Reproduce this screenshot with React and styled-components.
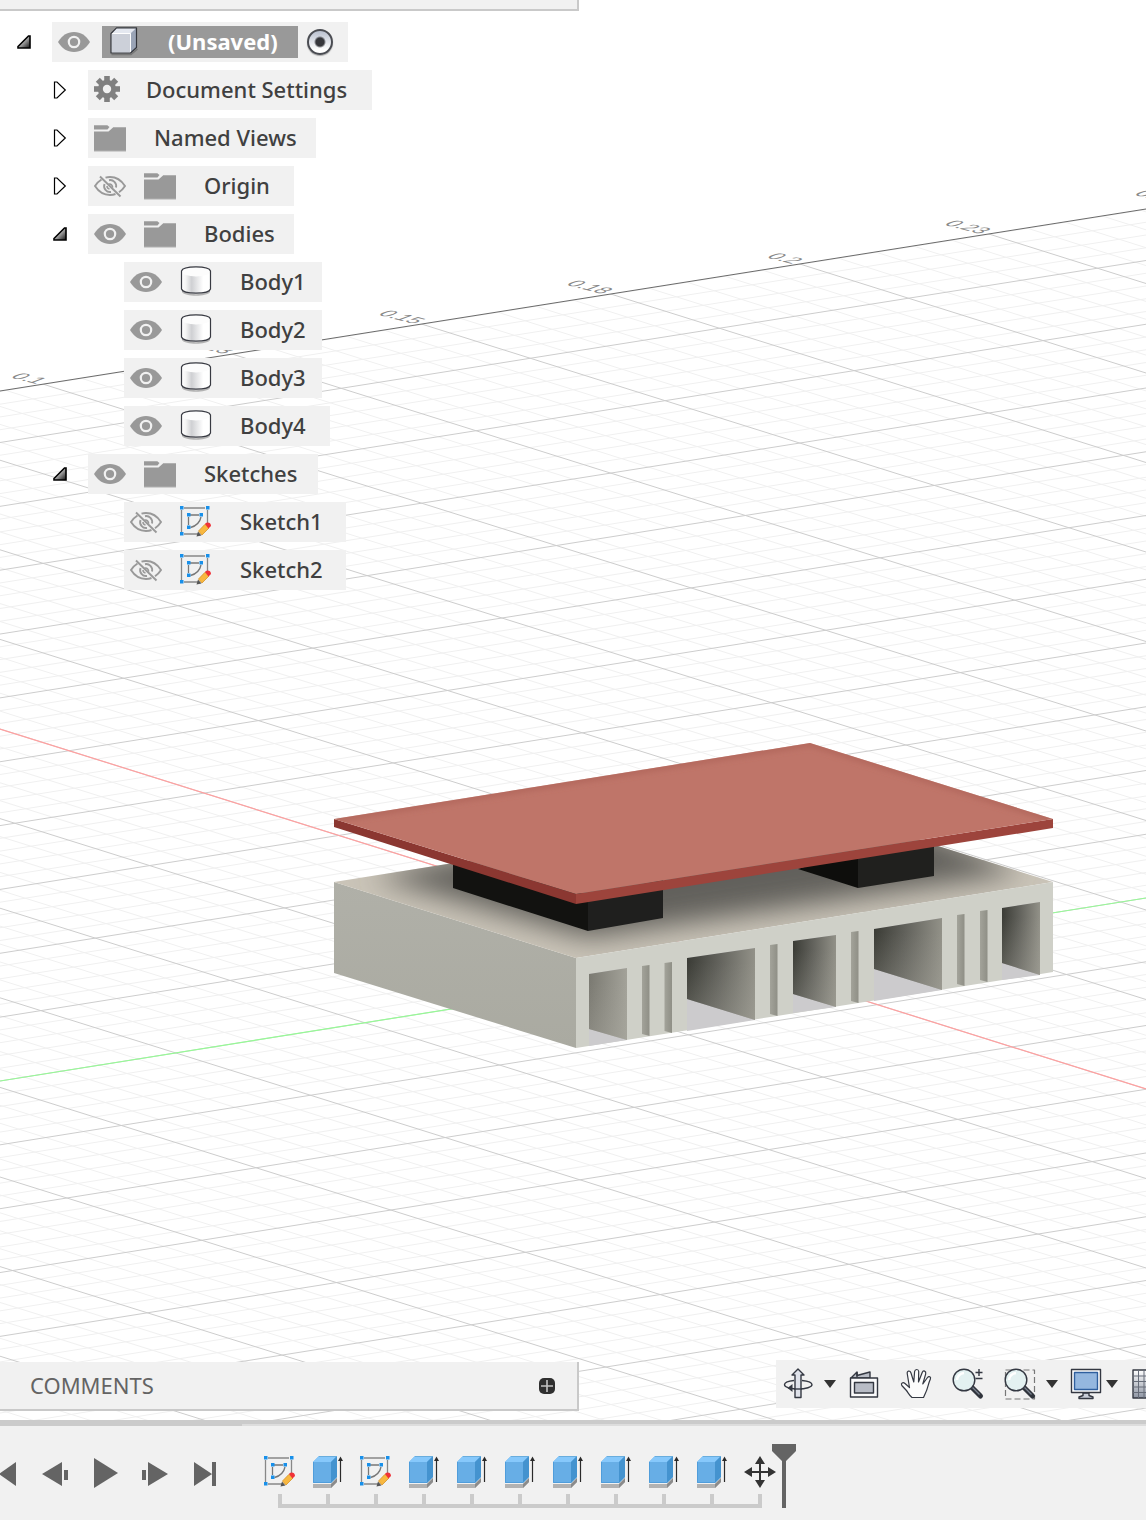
import React, { useState } from "react";
import styled, { createGlobalStyle } from "styled-components";

const GlobalStyle = createGlobalStyle`
  * { box-sizing: border-box; }
  body { margin: 0; background: #fff; }
  button { margin: 0; padding: 0; border: 0; background: none; font: inherit; color: inherit; }
  ul, ol { list-style: none; margin: 0; padding: 0; }
  svg { display: block; flex: none; }
`;

/* ---------- layout ---------- */

const Page = styled.main`
  min-height: 100vh;
  display: grid;
  grid-template-rows: 1fr auto;
  overflow: hidden;
  font-family: "Noto Sans", "Open Sans", sans-serif;
  font-size: 22px;
  font-weight: 500;
  line-height: 32px;
  color: #404040;
`;

const Workspace = styled.section`
  display: grid;
  grid-template: minmax(0, 1fr) / minmax(0, 1fr);
  min-height: 0;
`;

const SceneSvg = styled.svg`
  grid-area: 1 / 1;
  width: 100%;
  height: 100%;
`;

const Overlay = styled.div`
  grid-area: 1 / 1;
  display: flex;
  flex-direction: column;
  justify-content: space-between;
  z-index: 1;
`;

const BrowserHeader = styled.div`
  width: 579px;
  height: 11px;
  background: #f1f1f1;
  border-bottom: 2px solid #c9c9c9;
  border-right: 2px solid #c9c9c9;
`;

const Tree = styled.ul`
  padding-top: 7px;
`;

const TreeRow = styled.li`
  display: flex;
  align-items: center;
  height: 48px;
  padding-left: ${(p) => p.$level * 36}px;
`;

const Toggle = styled.button`
  width: 52px;
  height: 40px;
  padding-left: 17px;
  visibility: ${(p) => (p.$leaf ? "hidden" : "visible")};
`;

const RowBody = styled.div`
  display: flex;
  align-items: center;
  width: ${(p) => p.$width}px;
  height: 40px;
  padding-left: 6px;
  background: #f1f1f1;
  white-space: nowrap;
`;

const EyeButton = styled.button`
  width: 32px;
  height: 32px;
  margin-right: ${(p) => (p.$root ? 12 : 18)}px;
`;

const Label = styled.span`
  margin-left: 28px;
  padding-bottom: 2px;
`;

const RootChip = styled.span`
  display: flex;
  align-items: center;
  width: 196px;
  height: 32px;
  padding-left: 6px;
  background: #999;
  color: #fff;
  font-weight: 700;
`;

const ActiveRadio = styled.input`
  appearance: none;
  width: 26px;
  height: 26px;
  margin: 0 0 0 9px;
  border: 2px solid #4a4c52;
  border-radius: 50%;
  background:
    radial-gradient(circle, #36373c 0 4px, transparent 6px),
    linear-gradient(#b9c0cf, #fff 85%);
  box-shadow: 0 1px 1px #aaa;
`;

const BottomRow = styled.div`
  display: flex;
  justify-content: space-between;
  align-items: flex-start;
  height: 60px;
`;

const CommentsPanel = styled.div`
  display: flex;
  align-items: center;
  justify-content: space-between;
  width: 579px;
  height: 49px;
  margin-top: 2px;
  padding: 0 22px 0 30px;
  background: #f1f1f1;
  border-right: 2px solid #c9c9c9;
  border-bottom: 2px solid #c9c9c9;
  color: #646464;
  font-weight: 400;
`;

const PanelTitle = styled.span`
  padding-bottom: 2px;
`;

const NavBar = styled.nav`
  display: flex;
  align-items: center;
  width: 370px;
  height: 48px;
  padding-left: 6px;
  background: #f1f1f1;
  overflow: hidden;
`;

const Tool = styled.button`
  flex: none;
  margin-left: ${(p) => p.$gap || 0}px;
`;

const Timeline = styled.footer`
  display: flex;
  height: 100px;
  background: #f1f1f1;
  border-top: 4px solid #cbcbcb;
`;

const Playback = styled.div`
  display: flex;
  align-items: flex-start;
  gap: 20px;
  flex: none;
  width: 242px;
  padding-top: 30px;
  border-top: 2px solid #cbcbcb;
  overflow: hidden;

  & > button:first-child { margin-left: -10px; }
`;

const History = styled.div`
  display: flex;
  flex: 1;
  align-items: flex-start;
  padding-left: 14px;
  border-top: 2px solid #ddd;
`;

const Track = styled.div`
  padding-top: 30px;
`;

const Steps = styled.ol`
  display: flex;
`;

const Step = styled.li`
  display: flex;
  flex-direction: column;
  align-items: center;
  gap: 6px;
  width: 48px;

  &::after { content: ""; width: 4px; height: 10px; background: #cbcbcb; }
`;

const Rail = styled.div`
  height: 4px;
  margin: 0 22px;
  background: #cbcbcb;
`;

const Marker = styled.button`
  margin: 18px 0 0 -12px;
`;

/* ---------- tree icons ---------- */

const OpenArrow = () => (
  <svg width="14" height="14" viewBox="0 0 14 14">
    <defs>
      <linearGradient id="arrowFill" x1="0" y1="0" x2="1" y2="1">
        <stop offset=".3" stopColor="#ddd" />
        <stop offset="1" stopColor="#111" />
      </linearGradient>
    </defs>
    <path d="M1 13V11.5L11.5 1H13V13Z" fill="url(#arrowFill)" stroke="#000" strokeWidth="1.6" />
  </svg>
);

const ClosedArrow = () => (
  <svg width="14" height="18" viewBox="0 0 14 18">
    <path d="M1.5 1H4L12.3 9L4 17H1.5Z" fill="#fff" stroke="#000" strokeWidth="1.2" />
  </svg>
);

const Eye = () => (
  <svg width="32" height="32" viewBox="0 0 32 32">
    <path d="M0 16C4 9.5 9 6 16 6S28 9.500 32 16C28 22.500 23 26 16 26S4 22.500 0 16Z" fill="#999" />
    <circle cx="16" cy="16" r="5.200" fill="#999" stroke="#f1f1f1" strokeWidth="2.200" />
  </svg>
);

const EyeOff = () => (
  <svg width="32" height="32" viewBox="0 0 32 32" fill="none" stroke="#999" strokeWidth="1.900">
    <path d="M7.500 9.500C4.800 11.200 2.500 13.500 1 16C4.500 21.500 9.500 25 16 25C18 25 19.800 24.700 21.500 24" />
    <path d="M11.500 7.700C13 7.200 14.500 7 16 7C22.500 7 27.500 10.500 31 16C29.500 18.400 27.400 20.600 25 22.200" />
    <path d="M10.500 14A6 6 0 0 0 17 22M15 10.200A6 6 0 0 1 22 17.500" />
    <path d="M14.500 14.300A3 3 0 0 1 18.500 17.800M13 16A3 3 0 0 0 15.500 19" strokeWidth="1.500" />
    <path d="M6 6.500L26.500 26.500" />
  </svg>
);

const Folder = () => (
  <svg width="32" height="32" viewBox="0 0 32 32">
    <path d="M0 3.500H13.500L15.500 5L13.500 7.500H0Z" fill="#999" />
    <path d="M0 9.500H14.500L19 5.500H32V29H0Z" fill="#999" />
    <path d="M0 29h32M19 5.500h13M0 3.500h13.500" stroke="#b0b0b0" />
  </svg>
);

const Gear = () => (
  <svg width="24" height="32" viewBox="0 0 24 32" overflow="visible">
    <g transform="translate(13 15)" fill="#808080">
      {[0, 45, 90, 135].map((a) => (
        <rect key={a} x="-2.800" y="-13" width="5.600" height="26" transform={`rotate(${a})`} />
      ))}
      <circle r="9.200" />
      <circle r="4.200" fill="#f1f1f1" />
    </g>
  </svg>
);

const Cylinder = () => (
  <svg width="32" height="32" viewBox="0 0 32 32">
    <defs>
      <linearGradient id="cylFill">
        <stop offset="0" stopColor="#fff" />
        <stop offset=".15" stopColor="#f4f4f4" />
        <stop offset=".35" stopColor="#cfd0d3" />
        <stop offset=".75" stopColor="#fff" />
      </linearGradient>
    </defs>
    <path d="M2 24C5 29.500 27 29.500 30 24V26C27 31 5 31 2 26Z" fill="#888" opacity=".6" />
    <path d="M1.500 5V23C3 28.500 29 28.500 30.500 23V5Z" fill="url(#cylFill)" />
    <ellipse cx="16" cy="5.700" rx="14.500" ry="4.700" fill="#fcfcfc" />
    <path d="M1.500 5V23C3 28.500 29 28.500 30.500 23V5C29 -.5 3 -.5 1.500 5Z" fill="none" stroke="#383a42" strokeWidth="1.200" />
  </svg>
);

const Cube = () => (
  <svg width="32" height="32" viewBox="0 0 32 32">
    <path d="M3.500 28.500H23L29.500 23" fill="none" stroke="#555" strokeWidth="1.500" opacity=".5" />
    <path d="M3 7.500L8.500 1.800H28.500V21.500L22.500 27H3Z" fill="#e4e8f0" />
    <path d="M22.500 7.500L28.500 1.800V21.500L22.500 27Z" fill="#9aa4b6" />
    <path d="M4 8H22V26H4Z" fill="#ccd0d9" />
    <path d="M3 7.500H22.500V27" fill="none" stroke="#fff" />
    <path d="M3 7.500L8.500 1.800H28.500V21.500L22.500 27H3Z" fill="none" stroke="#32343a" strokeWidth="1.200" strokeLinejoin="round" />
  </svg>
);

const SketchIcon = () => (
  <svg width="32" height="32" viewBox="0 0 32 32">
    <path d="M4 2H25M1.500 4V26M27.500 4V18M4 28H18" fill="none" stroke="#888" strokeWidth="1.300" />
    <path d="M10 9H19M8.500 11V19M21 11C20 16 16 20 10.500 21.500" fill="none" stroke="#777" strokeWidth="1.300" />
    {[[0, 0], [26, 0], [0, 26], [7, 7], [19.500, 7], [7, 19.500]].map(([x, y]) => (
      <rect key={`${x}-${y}`} x={x} y={y} width="3.500" height="3.500" fill="#1890ea" />
    ))}
    <path d="M16.500 30.500L18 25.500L21.500 29.500Z" fill="#555" />
    <path d="M18.500 25L25 18.300L29 22L22 29Z" fill="#f8b840" stroke="#d69328" strokeWidth=".8" />
    <path d="M25 18C26.500 15.500 31 16 31 20L28.500 22.500Z" fill="#f03238" />
  </svg>
);

const ExtrudeIcon = () => (
  <svg width="32" height="32" viewBox="0 0 32 32">
    <path d="M1 28H19L25 22V26L19 32H1Z" fill="#b2b2b2" />
    <path d="M19 28L25 22V26L19 32Z" fill="#8b8b8b" />
    <path d="M1 6L7 0H25V21L19 27H1Z" fill="#67aee6" />
    <path d="M1 6L7 0H25L19 6Z" fill="#86c8fb" />
    <path d="M19 6L25 0V21L19 27Z" fill="#4493cf" />
    <path d="M1.500 6V26.500H19" fill="none" stroke="#4f9ddb" />
    <path d="M7 .5H24.500" stroke="#69addd" />
    <path d="M28.500 3V26" stroke="#2a2a2a" strokeWidth="1.200" />
    <path d="M28.500 .5L31 5H26Z" fill="#2a2a2a" />
  </svg>
);

const MoveIcon = () => (
  <svg width="32" height="32" viewBox="0 0 32 32" fill="#333">
    <path d="M15 7H17V15H25V17H17V25H15V17H7V15H15Z" />
    <path d="M16 0L21 8H11ZM16 32L21 24H11ZM0 16L8 11V21ZM32 16L24 11V21Z" />
  </svg>
);

/* ---------- navigation icons ---------- */

const NavSvg = ({ children }) => (
  <svg width="32" height="32" viewBox="0 0 32 32" fill="none" stroke="#343842" strokeWidth="1.400" strokeLinejoin="round" overflow="visible">
    {children}
  </svg>
);

const Caret = () => (
  <svg width="12" height="8" viewBox="0 0 12 8">
    <path d="M0 0H12L6 8Z" fill="#333" />
  </svg>
);

const OrbitIcon = () => (
  <NavSvg>
    <path d="M20 12.500C26 13 30 14.500 30 16.800C30 19 24 21 16 21C13 21 9 20.500 6 20M12 12.500C6 13 2.500 14.500 2.500 16.800C2.500 18 4 19 6 19.700" />
    <path d="M16 1L22 7H19V29.500H13V7H10Z" fill="#dfe2ea" />
    <path d="M12 21H20" />
    <path d="M5.500 20L10.500 16V24Z" fill="#343842" stroke="none" />
  </NavSvg>
);

const LookAtIcon = () => (
  <NavSvg>
    <path d="M3 10L9 4V7.500L22 4V10Z" fill="#b9bdc6" />
    <path d="M9 4V9" />
    <rect x="2.500" y="10" width="27" height="19" fill="#fafafb" />
    <rect x="6.500" y="14.500" width="19" height="10.500" fill="#b8bcc6" />
  </NavSvg>
);

const HandIcon = () => (
  <NavSvg>
    <path
      d="M12 29.500C9 27 8.500 25 6 22L1.800 17.500C.5 15 3 13.800 5 15.500L9.500 19.500L7.300 6C6.500 2.500 10 2 11 5L13.800 14L14.600 3.500C15 .8 18.500 .8 18.700 3.500L18.500 14L22.200 4.500C23.300 1.800 26.300 3 25.700 5.800L22.800 16L27.500 9.500C29 7.500 31.300 9 30.300 11.200C28 16 28 20 25.500 25L23.500 29.500Z"
      fill="#fcfcfc"
      strokeWidth="1.200"
    />
  </NavSvg>
);

const Lens = () => (
  <>
    <path d="M18.500 18L28.500 28" stroke="#30343c" strokeWidth="5" strokeLinecap="round" />
    <path d="M20 19L27.500 26.500" stroke="#7b8290" strokeWidth="1.200" />
    <circle cx="12" cy="12" r="10.800" fill="#e3f1f1" />
    <path d="M5 12A7.500 7.500 0 0 1 12 5" stroke="#fff" strokeWidth="2.500" />
  </>
);

const ZoomIcon = () => (
  <NavSvg>
    <Lens />
    <path d="M27 1V8M23.500 4.500H30.500M23.500 10.500H30.500" />
  </NavSvg>
);

const FitIcon = () => (
  <NavSvg>
    <rect x="1.500" y="2" width="29" height="29" stroke="#777" strokeWidth="1.200" strokeDasharray="6 3" />
    <Lens />
  </NavSvg>
);

const DisplayIcon = () => (
  <NavSvg>
    <path d="M13 25H19V27.500L23 29V30.500H9V29L13 27.500Z" fill="#c9ced8" />
    <rect x="1.500" y="1.500" width="29" height="23" fill="#fff" />
    <rect x="4.500" y="4.500" width="23" height="17" fill="#94b7df" stroke="#2f5f9e" />
  </NavSvg>
);

const GridIcon = () => (
  <NavSvg>
    <defs>
      <linearGradient id="gridFill" x2="0" y2="1">
        <stop stopColor="#fff" />
        <stop offset="1" stopColor="#8e95a3" />
      </linearGradient>
    </defs>
    <rect x="1" y="2" width="28" height="28" fill="url(#gridFill)" />
    <path d="M6.500 2V30M12 2V30M17.500 2V30M1 8H29M1 13.500H29M1 19H29M1 24.500H29" stroke="#666c78" strokeWidth="1" />
  </NavSvg>
);

const AddIcon = () => (
  <svg width="16" height="16" viewBox="0 0 16 16">
    <rect width="16" height="16" rx="5" fill="#2f2f2f" />
    <path d="M8 2V14M2 8H14" stroke="#c4c4c4" strokeWidth="1.600" />
  </svg>
);

/* ---------- playback ---------- */

const PLAYBACK = [
  ["Go to start", "M26 6V30L9 18Z"],
  ["Step back", "M22 6V30L2 18ZM24 14H28V24H24Z"],
  ["Play", "M4 2V32L28 17Z"],
  ["Step forward", "M8 6V30L28 18ZM2 14H6V24H2Z"],
  ["Go to end", "M4 6V30L22 18ZM22 6H26V30H22Z"],
];

/* ---------- 3D scene ---------- */

const W = 1146;
const H = 1420;

const gridLines = (startLeft, startRight, stepLeft, stepRight, from, to) => {
  const major = [];
  const minor = [];
  for (let i = from; i <= to; i++) {
    const d = `M0 ${startLeft + (stepLeft * i) / 5}L${W} ${startRight + (stepRight * i) / 5}`;
    (i % 5 === 0 ? major : minor).push(d);
  }
  return { major: major.join(""), minor: minor.join("") };
};

const rising = gridLines(1081, 898, 63.85, 63.75, -54, 44);
const falling = gridLines(729, 1089, 89.6, 89.5, -60, 40);

const AXIS_LABELS = [
  ["0.1", 48, 384],
  ["0.13", 236, 354],
  ["0.15", 426, 324],
  ["0.18", 614, 294],
  ["0.2", 804, 264],
  ["0.23", 992, 234],
  ["0.25", 1182, 204],
];

const BAYS = [
  { x1: 589, x2: 627, t1: 974, t2: 968, b1: 1029, b2: 1040, floor: 1046, fill: "bayLight" },
  { x1: 687, x2: 755, t1: 958, t2: 948, b1: 999, b2: 1020, floor: 1031, fill: "bay" },
  { x1: 793, x2: 836, t1: 941, t2: 935, b1: 994, b2: 1007, floor: 1013, fill: "bay" },
  { x1: 874, x2: 942, t1: 929, t2: 918, b1: 969, b2: 990, floor: 1001, fill: "bay" },
  { x1: 1002, x2: 1040, t1: 908, t2: 902, b1: 963, b2: 975, floor: 980, fill: "bay" },
];

const SLITS = [
  [642, 966, 1034],
  [664.5, 963, 1031],
  [770, 945, 1014],
  [851, 932, 1001],
  [957, 915, 984],
  [980, 911, 980],
];

const Scene = () => (
  <SceneSvg viewBox={`0 0 ${W} ${H}`} preserveAspectRatio="xMinYMin slice" role="img" aria-label="3D model view">
    <defs>
      <clipPath id="plane"><path d={`M0 391L${W} 209V${H}H0Z`} /></clipPath>
      <clipPath id="baseTop"><path d="M334 882L810 806L1053 882L576 958Z" /></clipPath>
      <clipPath id="boardTop"><path d="M334 819L810 743L1053 819L576 894Z" /></clipPath>
      <filter id="soft" x="-20%" y="-40%" width="140%" height="180%"><feGaussianBlur stdDeviation="14" /></filter>
      <filter id="edge" x="-10%" y="-10%" width="120%" height="120%"><feGaussianBlur stdDeviation="3" /></filter>
      <linearGradient id="bay"><stop stopColor="#3b3c36" /><stop offset=".45" stopColor="#61615b" /><stop offset="1" stopColor="#929188" /></linearGradient>
      <linearGradient id="bayLight"><stop stopColor="#7b7a72" /><stop offset="1" stopColor="#a3a299" /></linearGradient>
      <linearGradient id="bayShade" x2="0" y2="1"><stop offset=".2" stopColor="#aaa9a0" stopOpacity="0" /><stop offset="1" stopColor="#aaa9a0" stopOpacity=".35" /></linearGradient>
      <linearGradient id="slit"><stop stopColor="#a3a39a" /><stop offset="1" stopColor="#8f8f86" /></linearGradient>
      <linearGradient id="side" x2="0" y2="1"><stop stopColor="#b0b0a8" /><stop offset="1" stopColor="#aaaaa1" /></linearGradient>
    </defs>

    <rect width={W} height={H} fill="#fff" />
    <g clipPath="url(#plane)" fill="none">
      <path d={rising.minor + falling.minor} stroke="#f0f0f0" />
      <path d={rising.major + falling.major} stroke="#cdcdcd" />
      <path d="M0 729L1146 1089" stroke="#ffa0a0" strokeWidth="1.200" />
      <path d="M0 1081L1146 898" stroke="#96fa96" strokeWidth="1.200" />
    </g>
    <path d="M0 391L1146 209" stroke="#6a6a6a" />
    <g fontFamily="Liberation Sans, sans-serif" fontSize="17" fontWeight="400" fill="#888">
      {AXIS_LABELS.map(([text, x, y]) => (
        <text key={text} textAnchor="end" transform={`matrix(1.120 .29 -1.100 .4 ${x - 12} ${y})`}>{text}</text>
      ))}
    </g>

    <path d="M334 882L576 958V1048L334 973Z" fill="url(#side)" />
    <path d="M334 882L810 806L1053 882L576 958Z" fill="#cac4b8" />
    <g clipPath="url(#baseTop)">
      <path d="M372 876L810 780L1022 872L588 938Z" fill="#62605b" filter="url(#soft)" />
    </g>
    <path d="M576 958L1053 882V972L576 1048Z" fill="#cfd0c8" />
    {BAYS.map((b) => (
      <g key={b.x1}>
        <path d={`M${b.x1} ${b.t1}L${b.x2} ${b.t2}V${b.b2}L${b.x1} ${b.floor}Z`} fill="#cccbcd" />
        <path d={`M${b.x1} ${b.t1}L${b.x2} ${b.t2}V${b.b2}L${b.x1} ${b.b1}Z`} fill={`url(#${b.fill})`} />
        <path d={`M${b.x1} ${b.t1}L${b.x2} ${b.t2}V${b.b2}L${b.x1} ${b.b1}Z`} fill="url(#bayShade)" />
      </g>
    ))}
    {SLITS.map(([x, top, bottom]) => (
      <path key={x} d={`M${x} ${top}L${x + 7.5} ${top - 1}V${bottom + 2}L${x} ${bottom}Z`} fill="url(#slit)" />
    ))}

    <path d="M453 860L588 895V931L453 888Z" fill="#121210" />
    <path d="M588 895L663 880V918L588 931Z" fill="#1f1f1e" />
    <path d="M798 869L858 850V888Z" fill="#0e0e0c" />
    <path d="M858 850L934 840V876L858 888Z" fill="#20201e" />

    <path d="M334 819L576 894V904L334 827Z" fill="#8b3731" />
    <path d="M576 894L1053 819V828L576 904Z" fill="#9d443c" />
    <path d="M334 819L810 743L1053 819L576 894Z" fill="#bf7569" />
    <g clipPath="url(#boardTop)">
      <path d="M334 819L810 743L1053 819" fill="none" stroke="#ae6359" strokeWidth="5" filter="url(#edge)" />
    </g>
  </SceneSvg>
);

/* ---------- data ---------- */

const TREE = [
  { label: "Document Settings", level: 1, icon: Gear, width: 284 },
  { label: "Named Views", level: 1, icon: Folder, width: 228 },
  { label: "Origin", level: 1, icon: Folder, width: 206, eye: "off" },
  { label: "Bodies", level: 1, icon: Folder, width: 206, eye: "on", open: true },
  { label: "Body1", level: 2, icon: Cylinder, width: 198, eye: "on" },
  { label: "Body2", level: 2, icon: Cylinder, width: 198, eye: "on" },
  { label: "Body3", level: 2, icon: Cylinder, width: 198, eye: "on" },
  { label: "Body4", level: 2, icon: Cylinder, width: 206, eye: "on" },
  { label: "Sketches", level: 1, icon: Folder, width: 230, eye: "on", open: true },
  { label: "Sketch1", level: 2, icon: SketchIcon, width: 222, eye: "off" },
  { label: "Sketch2", level: 2, icon: SketchIcon, width: 222, eye: "off" },
];

const STEPS = [
  SketchIcon, ExtrudeIcon, SketchIcon, ExtrudeIcon, ExtrudeIcon, ExtrudeIcon,
  ExtrudeIcon, ExtrudeIcon, ExtrudeIcon, ExtrudeIcon, MoveIcon,
];

const TOOLS = [
  ["Orbit", OrbitIcon, 0],
  ["Orbit options", Caret, 10],
  ["Look at", LookAtIcon, 12],
  ["Pan", HandIcon, 20],
  ["Zoom", ZoomIcon, 20],
  ["Fit", FitIcon, 20],
  ["Fit options", Caret, 10],
  ["Display settings", DisplayIcon, 12],
  ["Display options", Caret, 4],
  ["Grid and snaps", GridIcon, 14],
];

const TreeItem = ({ item }) => {
  const [visible, setVisible] = useState(item.eye === "on");
  const Icon = item.icon;
  return (
    <TreeRow $level={item.level}>
      <Toggle $leaf={item.level === 2} aria-label={`Expand ${item.label}`}>
        {item.open ? <OpenArrow /> : <ClosedArrow />}
      </Toggle>
      <RowBody $width={item.width}>
        {item.eye && (
          <EyeButton aria-label={`Show ${item.label}`} onClick={() => setVisible(!visible)}>
            {visible ? <Eye /> : <EyeOff />}
          </EyeButton>
        )}
        <Icon />
        <Label>{item.label}</Label>
      </RowBody>
    </TreeRow>
  );
};

export default function App() {
  return (
    <Page>
      <GlobalStyle />
      <Workspace>
        <Scene />
        <Overlay>
          <div>
            <BrowserHeader />
            <Tree>
              <TreeRow $level={0}>
                <Toggle aria-label="Collapse document"><OpenArrow /></Toggle>
                <RowBody $width={296}>
                  <EyeButton $root aria-label="Show document"><Eye /></EyeButton>
                  <RootChip><Cube /><Label>(Unsaved)</Label></RootChip>
                  <ActiveRadio type="radio" name="active" defaultChecked aria-label="Active component" />
                </RowBody>
              </TreeRow>
              {TREE.map((item) => <TreeItem key={item.label} item={item} />)}
            </Tree>
          </div>
          <BottomRow>
            <CommentsPanel>
              <PanelTitle>COMMENTS</PanelTitle>
              <button aria-label="Add comment"><AddIcon /></button>
            </CommentsPanel>
            <NavBar>
              {TOOLS.map(([name, Icon, gap]) => (
                <Tool key={name} aria-label={name} $gap={gap}><Icon /></Tool>
              ))}
            </NavBar>
          </BottomRow>
        </Overlay>
      </Workspace>
      <Timeline>
        <Playback>
          {PLAYBACK.map(([name, d]) => (
            <button key={name} aria-label={name}>
              <svg width="30" height="36" viewBox="0 0 30 36"><path d={d} fill="#646464" /></svg>
            </button>
          ))}
        </Playback>
        <History>
          <Track>
            <Steps>
              {STEPS.map((Icon, i) => <Step key={i}><Icon /></Step>)}
            </Steps>
            <Rail />
          </Track>
          <Marker aria-label="Timeline position">
            <svg width="24" height="64" viewBox="0 0 24 64">
              <path d="M0 0H24V7L14 17V64H10V17L0 7Z" fill="#646464" />
            </svg>
          </Marker>
        </History>
      </Timeline>
    </Page>
  );
}
